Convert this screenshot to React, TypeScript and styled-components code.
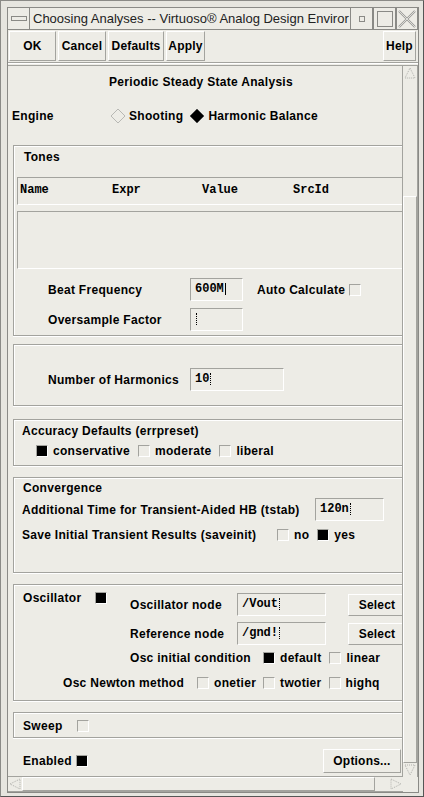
import React from 'react';
import styled, { createGlobalStyle } from 'styled-components';

const BG = '#edece6';
const DARK = '#a3a39e';
const LIGHT = '#ffffff';
const SANS = '"Liberation Sans", Arial, sans-serif';
const MONO = '"Liberation Mono", "Courier New", monospace';

const GlobalStyle = createGlobalStyle`
  html, body { margin: 0; padding: 0; background: ${BG}; }
  body { width: 424px; height: 797px; overflow: hidden; font-family: ${SANS}; color: #000; }
  * { box-sizing: border-box; }
`;

const WMFrame = styled.div`
  width: 424px;
  height: 797px;
  background: #e6e5df;
  border-left: 1px solid #8a8a86;
  border-top: 1px solid #8a8a86;
  border-right: 1px solid #555;
  border-bottom: 1px solid #555;
  padding: 6px 4px 3px 6px;
  display: flex;
  flex-direction: column;
`;

const TitleBar = styled.div`
  height: 23px;
  display: flex;
  align-items: stretch;
  border: 1px solid #8a8a86;
  background: ${BG};
`;

const ChromeBtn = styled.div<{ $w: number }>`
  width: ${p => p.$w}px;
  display: flex;
  align-items: center;
  justify-content: center;
  border-left: 1px solid #8a8a86;
  border-right: 1px solid #8a8a86;
  &:first-child { border-left: none; }
`;

const TitleText = styled.div`
  flex: 1;
  display: flex;
  align-items: center;
  padding-left: 3px;
  font-family: ${SANS};
  font-size: 13px;
  color: #222;
  white-space: nowrap;
  overflow: hidden;
`;

const Client = styled.div`
  flex: 1;
  display: flex;
  flex-direction: column;
  background: ${BG};
  border: 1px solid #8a8a86;
  border-top: none;
`;

const Toolbar = styled.div`
  height: 33px;
  display: flex;
  gap: 2px;
  padding: 1px 2px 0 1px;
  border-bottom: 1px solid ${DARK};
  box-shadow: 0 1px 0 ${LIGHT};
`;

const PushButton = styled.button<{ $w: number; $h?: number; $push?: boolean }>`
  width: ${p => p.$w}px;
  height: ${p => p.$h ?? 30}px;
  flex: none;
  margin-left: ${p => (p.$push ? 'auto' : '0')};
  background: ${BG};
  border: 1px solid;
  border-color: ${LIGHT} ${DARK} ${DARK} ${LIGHT};
  font-family: ${SANS};
  font-weight: bold;
  font-size: 12px;
  letter-spacing: 0.2px;
  color: #000;
  padding: 0;
`;

const ScrollWin = styled.div`
  flex: 1;
  margin-top: 2px;
  display: grid;
  grid-template-columns: 1fr 15px;
  grid-template-rows: 1fr 15px;
  border-top: 1px solid ${DARK};
`;

const Viewport = styled.div`
  overflow: hidden;
  border-right: 1px solid ${DARK};
  border-bottom: 1px solid ${DARK};
`;

const Content = styled.div`
  width: 420px;
  padding-top: 4px;
  display: flex;
  flex-direction: column;
  font-size: 12px;
  font-weight: bold;
  letter-spacing: 0.3px;
`;

const Heading = styled.div`
  width: 386px;
  height: 24px;
  line-height: 24px;
  text-align: center;
  font-size: 12px;
`;

const EngineRow = styled.div`
  height: 24px;
  margin-top: 10px;
  padding-left: 4px;
  display: flex;
  align-items: center;
`;

const Label = styled.span<{ $w?: number }>`
  display: inline-block;
  flex: none;
  width: ${p => (p.$w ? `${p.$w}px` : 'auto')};
  white-space: nowrap;
`;

const RadioItem = styled.span`
  display: inline-flex;
  align-items: center;
  gap: 3px;
  margin-right: 6px;
`;

const Frame = styled.div<{ $top: number; $h: number }>`
  margin-top: ${p => p.$top}px;
  margin-left: 5px;
  width: 410px;
  height: ${p => p.$h}px;
  flex: none;
  border: 1px solid ${DARK};
  box-shadow: inset 1px 1px 0 ${LIGHT}, 0 1px 0 ${LIGHT};
  display: flex;
  flex-direction: column;
`;

const FrameTitle = styled.div<{ $pt: number; $pl: number }>`
  padding-top: ${p => p.$pt}px;
  padding-left: ${p => p.$pl}px;
  height: ${p => p.$pt + 16}px;
  line-height: 16px;
`;

const TableHead = styled.div`
  margin: 12px 0 0 3px;
  height: 28px;
  display: grid;
  grid-template-columns: 92px 90px 91px 1fr;
  align-items: center;
  padding: 0 0 3px 2px;
  border-top: 1px solid ${DARK};
  border-left: 1px solid ${DARK};
  border-bottom: 1px solid ${LIGHT};
  font-family: ${MONO};
  font-size: 12px;
  font-weight: bold;
  letter-spacing: 0;
`;

const TableBody = styled.div`
  margin: 6px 0 0 3px;
  height: 58px;
  border-top: 1px solid ${DARK};
  border-left: 1px solid ${DARK};
  border-bottom: 1px solid ${LIGHT};
`;

const FieldRow = styled.div<{ $top: number; $pl: number; $h?: number }>`
  margin-top: ${p => p.$top}px;
  padding-left: ${p => p.$pl}px;
  height: ${p => p.$h ?? 23}px;
  display: flex;
  align-items: center;
  white-space: nowrap;
`;

const TextField = styled.div<{ $w: number; $h?: number }>`
  width: ${p => p.$w}px;
  height: ${p => p.$h ?? 23}px;
  flex: none;
  border-top: 1px solid ${DARK};
  border-left: 1px solid ${DARK};
  border-bottom: 1px solid ${LIGHT};
  border-right: 1px solid ${LIGHT};
  padding: 0 0 2px 4px;
  display: flex;
  align-items: center;
  font-family: ${MONO};
  font-weight: bold;
  font-size: 12px;
  letter-spacing: 0;
`;

const Caret = styled.span<{ $solid?: boolean }>`
  display: inline-block;
  width: 0;
  height: 12px;
  margin-left: 1px;
  border-left: 1px ${p => (p.$solid ? 'solid' : 'dotted')} #000;
`;

const Box = styled.span<{ $on?: boolean; $ml?: number; $mr?: number }>`
  display: inline-block;
  flex: none;
  width: 12px;
  height: 12px;
  margin-left: ${p => p.$ml ?? 0}px;
  margin-right: ${p => p.$mr ?? 5}px;
  border-top: 1px solid ${DARK};
  border-left: 1px solid ${DARK};
  border-bottom: 1px solid ${LIGHT};
  border-right: 1px solid ${LIGHT};
  background: ${p => (p.$on ? '#000' : BG)};
`;

const OptGroup = styled.div<{ $gap?: number }>`
  display: flex;
  align-items: center;
  gap: ${p => p.$gap ?? 8}px;
`;

const Opt = styled.span`
  display: inline-flex;
  align-items: center;
`;

const OscGrid = styled.div`
  display: grid;
  grid-template-columns: 116px 107px 111px 1fr;
  grid-template-rows: 23px 23px 14px;
  row-gap: 6px;
  padding-top: 8px;
  align-items: center;
`;

const OscLead = styled.div`
  grid-row: 1;
  grid-column: 1;
  align-self: start;
  padding-left: 9px;
  display: flex;
  align-items: flex-start;
  gap: 14px;
  line-height: 12px;
  margin-top: -1px;
`;

const SpanRow = styled.div`
  grid-column: 2 / span 3;
  display: flex;
  align-items: center;
`;

const Footer = styled.div`
  margin-top: 11px;
  width: 395px;
  height: 24px;
  padding: 0 2px 0 15px;
  display: flex;
  align-items: center;
  justify-content: space-between;
`;

const VScroll = styled.div`
  border-right: 1px solid ${DARK};
  display: flex;
  flex-direction: column;
  align-items: stretch;
`;

const HScroll = styled.div`
  border-bottom: 1px solid ${DARK};
  display: flex;
  align-items: stretch;
`;

const Trough = styled.div<{ $vertical?: boolean }>`
  flex: 1;
  display: flex;
  flex-direction: ${p => (p.$vertical ? 'column' : 'row')};
`;

const Thumb = styled.div<{ $before: number; $after: number; $vertical?: boolean }>`
  flex: 1;
  ${p =>
    p.$vertical
      ? `margin-top: ${p.$before}px; margin-bottom: ${p.$after}px;`
      : `margin-left: ${p.$before}px; margin-right: ${p.$after}px;`}
  border: 1px solid;
  border-color: ${LIGHT} ${DARK} ${DARK} ${LIGHT};
`;

const ArrowCell = styled.div`
  flex: none;
  width: 14px;
  height: 14px;
  display: flex;
  align-items: center;
  justify-content: center;
`;

const Corner = styled.div``;

const Diamond: React.FC<{ on?: boolean }> = ({ on }) => (
  <svg width="16" height="16" viewBox="0 0 16 16">
    <polygon
      points="8,1 15,8 8,15 1,8"
      fill={on ? '#000' : BG}
      stroke={on ? '#555' : '#b8b8b4'}
      strokeWidth="1"
    />
  </svg>
);

const DotArrow: React.FC<{ dir: 'up' | 'down' | 'left' | 'right' }> = ({ dir }) => {
  const pts = {
    up: '6,1 11,11 1,11',
    down: '1,1 11,1 6,11',
    left: '1,6 11,1 11,11',
    right: '1,1 11,6 1,11',
  }[dir];
  return (
    <svg width="12" height="12" viewBox="0 0 12 12">
      <polygon points={pts} fill="none" stroke="#b0b0ac" strokeDasharray="1 1" />
    </svg>
  );
};

export default function App() {
  return (
    <>
      <GlobalStyle />
      <WMFrame>
        <TitleBar>
          <ChromeBtn $w={22}>
            <svg width="16" height="6" viewBox="0 0 16 6">
              <rect x="0.5" y="0.5" width="15" height="4" fill="none" stroke="#8a8a86" />
            </svg>
          </ChromeBtn>
          <TitleText>Choosing Analyses -- Virtuoso® Analog Design Enviror</TitleText>
          <ChromeBtn $w={23}>
            <svg width="6" height="6" viewBox="0 0 6 6">
              <rect x="0.5" y="0.5" width="5" height="5" fill="none" stroke="#8a8a86" />
            </svg>
          </ChromeBtn>
          <ChromeBtn $w={23}>
            <svg width="16" height="16" viewBox="0 0 16 16">
              <rect x="0.5" y="0.5" width="15" height="15" fill="none" stroke="#8a8a86" />
            </svg>
          </ChromeBtn>
          <ChromeBtn $w={22}>
            <svg width="18" height="18" viewBox="0 0 18 18">
              <path d="M1 1 L17 17 M17 1 L1 17" stroke="#9a9a96" strokeWidth="2.2" />
              <path d="M1 1 L17 17 M17 1 L1 17" stroke="#eeeeea" strokeWidth="0.8" />
            </svg>
          </ChromeBtn>
        </TitleBar>
        <Client>
          <Toolbar>
            <PushButton $w={47}>OK</PushButton>
            <PushButton $w={48}>Cancel</PushButton>
            <PushButton $w={56}>Defaults</PushButton>
            <PushButton $w={39}>Apply</PushButton>
            <PushButton $w={33} $push>Help</PushButton>
          </Toolbar>
          <ScrollWin>
            <Viewport>
              <Content>
                <Heading>Periodic Steady State Analysis</Heading>
                <EngineRow>
                  <Label $w={98}>Engine</Label>
                  <RadioItem><Diamond />Shooting</RadioItem>
                  <RadioItem><Diamond on />Harmonic Balance</RadioItem>
                </EngineRow>

                <Frame $top={17} $h={191}>
                  <FrameTitle $pt={3} $pl={10}>Tones</FrameTitle>
                  <TableHead>
                    <span>Name</span>
                    <span>Expr</span>
                    <span>Value</span>
                    <span>SrcId</span>
                  </TableHead>
                  <TableBody />
                  <FieldRow $top={9} $pl={34}>
                    <Label $w={142}>Beat Frequency</Label>
                    <TextField $w={53}>600M<Caret $solid /></TextField>
                    <Label style={{ marginLeft: 14 }}>Auto Calculate</Label>
                    <Box $ml={4} />
                  </FieldRow>
                  <FieldRow $top={7} $pl={34}>
                    <Label $w={142}>Oversample Factor</Label>
                    <TextField $w={53}><Caret /></TextField>
                  </FieldRow>
                </Frame>

                <Frame $top={8} $h={62}>
                  <FieldRow $top={23} $pl={34}>
                    <Label $w={142}>Number of Harmonics</Label>
                    <TextField $w={94}>10<Caret /></TextField>
                  </FieldRow>
                </Frame>

                <Frame $top={13} $h={47}>
                  <FrameTitle $pt={3} $pl={8}>Accuracy Defaults (errpreset)</FrameTitle>
                  <FieldRow $top={4} $pl={22} $h={16}>
                    <OptGroup>
                      <Opt><Box $on />conservative</Opt>
                      <Opt><Box />moderate</Opt>
                      <Opt><Box />liberal</Opt>
                    </OptGroup>
                  </FieldRow>
                </Frame>

                <Frame $top={11} $h={96}>
                  <FrameTitle $pt={2} $pl={9}>Convergence</FrameTitle>
                  <FieldRow $top={2} $pl={8}>
                    <Label $w={293}>Additional Time for Transient-Aided HB (tstab)</Label>
                    <TextField $w={69}>120n<Caret /></TextField>
                  </FieldRow>
                  <FieldRow $top={6} $pl={8} $h={16}>
                    <Label $w={255}>Save Initial Transient Results (saveinit)</Label>
                    <OptGroup>
                      <Opt><Box />no</Opt>
                      <Opt><Box $on />yes</Opt>
                    </OptGroup>
                  </FieldRow>
                </Frame>

                <Frame $top={11} $h={117}>
                  <OscGrid>
                    <OscLead>
                      <span>Oscillator</span>
                      <Box $on $mr={0} />
                    </OscLead>
                    <Label style={{ gridColumn: 2, gridRow: 1 }}>Oscillator node</Label>
                    <TextField $w={89} style={{ gridColumn: 3, gridRow: 1 }}>/Vout<Caret /></TextField>
                    <PushButton $w={58} $h={22} style={{ gridColumn: 4, gridRow: 1 }}>Select</PushButton>
                    <Label style={{ gridColumn: 2, gridRow: 2 }}>Reference node</Label>
                    <TextField $w={89} style={{ gridColumn: 3, gridRow: 2 }}>/gnd!<Caret /></TextField>
                    <PushButton $w={58} $h={22} style={{ gridColumn: 4, gridRow: 2 }}>Select</PushButton>
                    <SpanRow style={{ gridRow: 3 }}>
                      <Label $w={133}>Osc initial condition</Label>
                      <OptGroup>
                        <Opt><Box $on />default</Opt>
                        <Opt><Box />linear</Opt>
                      </OptGroup>
                    </SpanRow>
                  </OscGrid>
                  <FieldRow $top={6} $pl={49} $h={24}>
                    <Label $w={134}>Osc Newton method</Label>
                    <OptGroup $gap={7}>
                      <Opt><Box />onetier</Opt>
                      <Opt><Box />twotier</Opt>
                      <Opt><Box />highq</Opt>
                    </OptGroup>
                  </FieldRow>
                </Frame>

                <Frame $top={11} $h={26}>
                  <FieldRow $top={1} $pl={9} $h={24}>
                    <Label $w={54}>Sweep</Label>
                    <Box />
                  </FieldRow>
                </Frame>

                <Footer>
                  <Opt>
                    <Label $w={53}>Enabled</Label>
                    <Box $on />
                  </Opt>
                  <PushButton $w={78} $h={24}>Options...</PushButton>
                </Footer>
              </Content>
            </Viewport>
            <VScroll>
              <ArrowCell><DotArrow dir="up" /></ArrowCell>
              <Trough $vertical>
                <Thumb $vertical $before={116} $after={0} />
              </Trough>
              <ArrowCell><DotArrow dir="down" /></ArrowCell>
            </VScroll>
            <HScroll>
              <ArrowCell><DotArrow dir="left" /></ArrowCell>
              <Trough>
                <Thumb $before={0} $after={14} />
              </Trough>
              <ArrowCell><DotArrow dir="right" /></ArrowCell>
            </HScroll>
            <Corner />
          </ScrollWin>
        </Client>
      </WMFrame>
    </>
  );
}
